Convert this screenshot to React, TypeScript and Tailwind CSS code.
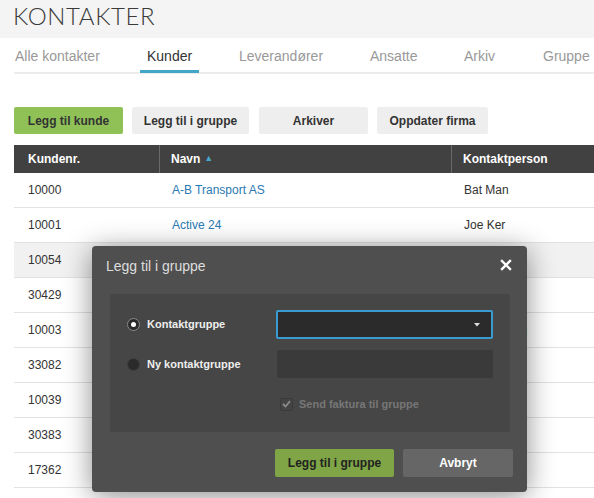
import React from "react";

const rows = [
  { nr: "10000", name: "A-B Transport AS", contact: "Bat Man" },
  { nr: "10001", name: "Active 24", contact: "Joe Ker" },
  { nr: "10054", name: "", contact: "", hl: true },
  { nr: "30429", name: "", contact: "" },
  { nr: "10003", name: "", contact: "Ola Hansen", blue: true },
  { nr: "33082", name: "", contact: "" },
  { nr: "10039", name: "", contact: "" },
  { nr: "30383", name: "", contact: "" },
  { nr: "17362", name: "", contact: "" },
];

const tabs = [
  { label: "Alle kontakter", w: "w-[132px]" },
  { label: "Kunder", w: "w-[92px]", active: true },
  { label: "Leverandører", w: "w-[131px]" },
  { label: "Ansatte", w: "w-[94px]" },
  { label: "Arkiv", w: "w-[79px]" },
  { label: "Gruppe", w: "w-[60px]" },
];

export default function App() {
  return (
    <div
      className="relative w-[594px] h-[498px] overflow-hidden bg-white"
      style={{ fontFamily: '"Liberation Sans", Arial, sans-serif' }}
    >
      <div className="h-[38px] bg-[#f4f4f4] pl-[13px] flex items-start pt-[4px]">
        <span
          className="text-[24px] font-light text-[#3a3a3a] leading-[24px] tracking-[0.6px]"
          style={{ fontFamily: 'Lato, "Liberation Sans", sans-serif' }}
        >
          KONTAKTER
        </span>
      </div>

      <div className="ml-[14px] h-[36px] border-b-2 border-[#ececec] flex items-center pt-[3px] whitespace-nowrap">
        {tabs.map((t) => (
          <div key={t.label} className={`${t.w} shrink-0 relative h-full flex items-center pl-[1px]`}>
            <span className={`text-[14px] ${t.active ? "text-[#333]" : "text-[#999]"}`}>{t.label}</span>
            {t.active && (
              <span className="absolute left-[-6px] w-[59px] bottom-[-1px] h-[3px] bg-[#42a6c6]" />
            )}
          </div>
        ))}
      </div>

      <div className="mt-[33px] ml-[14px] flex text-[12px] font-bold text-[#333]">
        <div className="w-[109px] h-[27px] rounded-[2px] bg-[#8fc157] flex items-center justify-center">Legg til kunde</div>
        <div className="ml-[9px] w-[117px] h-[27px] rounded-[2px] bg-[#eeeeee] flex items-center justify-center">Legg til i gruppe</div>
        <div className="ml-[10px] w-[109px] h-[27px] rounded-[2px] bg-[#eeeeee] flex items-center justify-center">Arkiver</div>
        <div className="ml-[9px] w-[111px] h-[27px] rounded-[2px] bg-[#eeeeee] flex items-center justify-center">Oppdater firma</div>
      </div>

      <div className="mt-[11px] ml-[14px]">
        <div className="h-[28px] bg-[#414141] flex text-[12px] font-bold text-white">
          <div className="w-[146px] pl-[14px] flex items-center border-r border-[#6a6a6a]">Kundenr.</div>
          <div className="w-[292px] pl-[11px] flex items-center border-r border-[#6a6a6a]">
            Navn
            <span className="ml-[4px] text-[9px] text-[#4aa6cc]">▲</span>
          </div>
          <div className="flex-1 pl-[11px] flex items-center">Kontaktperson</div>
        </div>
        {rows.map((r) => (
          <div
            key={r.nr}
            className={`h-[35px] flex text-[12px] border-b border-[#e2e2e2] ${r.hl ? "bg-[#f1f1f1]" : "bg-white"}`}
          >
            <div className="w-[146px] pl-[14px] flex items-center text-[#333]">{r.nr}</div>
            <div className="w-[292px] pl-[12px] flex items-center text-[#2a7ab2]">{r.name}</div>
            <div className={`flex-1 pl-[12px] flex items-center ${r.blue ? "text-[#2a7ab2]" : "text-[#333]"}`}>
              {r.contact}
            </div>
          </div>
        ))}
      </div>

      {/* Modal */}
      <div className="absolute left-[92px] top-[246px] w-[435px] h-[246px] rounded-[4px] bg-[#4f4f4f] shadow-[0_4px_28px_rgba(0,0,0,0.45)] flex flex-col">
        <div className="h-[48px] flex items-start pt-[10px] pl-[14px] pr-[15px] justify-between">
          <span className="text-[14px] text-[#dddddd]">Legg til i gruppe</span>
          <svg width="12" height="12" viewBox="0 0 12 12" className="mt-[3px]">
            <path d="M2 2 L10 10 M10 2 L2 10" stroke="#ffffff" strokeWidth="2.4" strokeLinecap="square" />
          </svg>
        </div>
        <div className="ml-[18px] mr-[17px] h-[138px] bg-[#464646] rounded-[2px] relative text-[11px] font-bold">
          <div className="absolute left-[17px] top-[16px] flex items-center h-[29px]">
            <span className="w-[13px] h-[13px] rounded-full bg-[#2b2b2b] border border-[#8a8a8a] flex items-center justify-center">
              <span className="w-[5px] h-[5px] rounded-full bg-white" />
            </span>
            <span className="ml-[7px] text-[#eeeeee]">Kontaktgruppe</span>
          </div>
          <div className="absolute left-[166px] top-[16px] w-[217px] h-[29px] border-2 border-[#3a9bd0] rounded-[2px] bg-[#2b2b2b] flex items-center justify-end pr-[11px]">
            <svg width="6" height="4" viewBox="0 0 6 4">
              <path d="M0 0 L6 0 L3 3.5 Z" fill="#e0e0e0" />
            </svg>
          </div>
          <div className="absolute left-[17px] top-[56px] flex items-center h-[28px]">
            <span className="w-[13px] h-[13px] rounded-full bg-[#2b2b2b] border border-[#3e3e3e]" />
            <span className="ml-[7px] text-[#eeeeee]">Ny kontaktgruppe</span>
          </div>
          <div className="absolute left-[167px] top-[56px] w-[216px] h-[28px] rounded-[2px] bg-[#3a3a3a]" />
          <div className="absolute left-[170px] top-[102px] flex items-center">
            <span className="w-[13px] h-[13px] rounded-[2px] border border-[#3a3a3a] bg-[#444] flex items-center justify-center">
              <svg width="9" height="8" viewBox="0 0 9 8">
                <path d="M1 4 L3.5 6.5 L8 1.2" stroke="#8a8a8a" strokeWidth="1.8" fill="none" />
              </svg>
            </span>
            <span className="ml-[6px] text-[#777777]">Send faktura til gruppe</span>
          </div>
        </div>
        <div className="mt-[17px] flex justify-end pr-[14px] text-[12px] font-bold">
          <div className="w-[119px] h-[28px] rounded-[2px] bg-[#7fa546] text-[#222] flex items-center justify-center">
            Legg til i gruppe
          </div>
          <div className="ml-[9px] w-[110px] h-[28px] rounded-[2px] bg-[#666666] text-white flex items-center justify-center">
            Avbryt
          </div>
        </div>
      </div>
    </div>
  );
}
